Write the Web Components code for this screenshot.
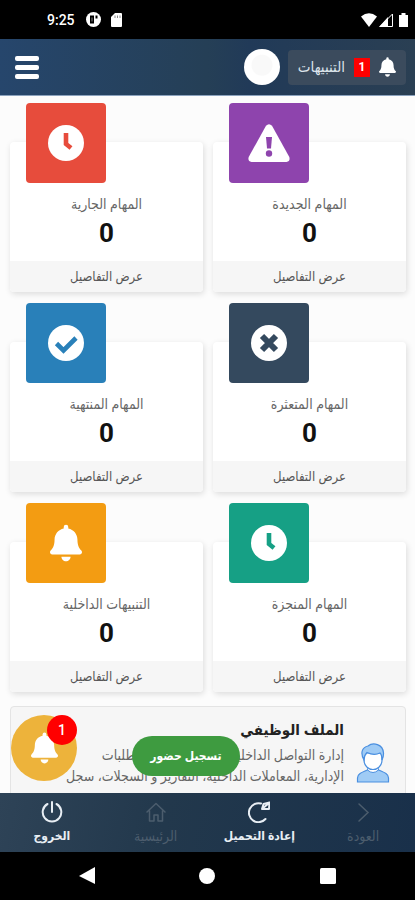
<!DOCTYPE html>
<html lang="ar" dir="rtl">
<head>
<meta charset="utf-8">
<meta name="viewport" content="width=device-width, initial-scale=1">
<title>المهام</title>
<style>
  html, body { margin: 0; height: 100%; }
  body { font-family: Roboto, "DejaVu Sans Condensed", "DejaVu Sans", sans-serif; background: #000; }
</style>
</head>
<body>
<task-app></task-app>

<script>
const ICONS = {
  bell: '<svg viewBox="0 0 448 512"><path fill="currentColor" d="M224 512c35 0 64-29 64-64H160c0 35 29 64 64 64zM439 362c-19-21-55-52-55-154 0-78-54-140-128-155V32a32 32 0 0 0-64 0v21C118 68 64 130 64 208c0 102-36 133-55 154-6 6-9 14-9 22 0 16 13 32 32 32h384c19 0 32-16 32-32 0-8-3-16-9-22z"/></svg>',
  clock: '<svg viewBox="0 0 36 36"><circle cx="18" cy="18" r="18" fill="currentColor"/><path d="M18 8v11l5 4" fill="none" stroke="var(--hole)" stroke-width="4.6"/></svg>',
  check: '<svg viewBox="0 0 36 36"><circle cx="18" cy="18" r="18" fill="currentColor"/><path d="M8.500 18.500l7 7L28 13" fill="none" stroke="var(--hole)" stroke-width="4.600"/></svg>',
  cross: '<svg viewBox="0 0 36 36"><circle cx="18" cy="18" r="18" fill="currentColor"/><path d="M11 11l14 14M25 11L11 25" fill="none" stroke="var(--hole)" stroke-width="6"/></svg>',
  warn: '<svg viewBox="0 0 42 38"><path fill="currentColor" d="M18 1.800Q21-1.500 24 1.800L41.300 33Q42.500 37.500 38.500 38H3.500Q-.5 37.500.7 33z"/><path fill="var(--hole)" d="M18 13h6l-1 11.500h-4z"/><circle cx="21" cy="29.500" r="3.200" fill="var(--hole)"/></svg>',
  power: '<svg viewBox="0 0 22 22" fill="none" stroke="currentColor" stroke-width="2" stroke-linecap="round"><path d="M11 1v10M6.500 3a9.300 9.300 0 1 0 9 0"/></svg>',
  home: '<svg viewBox="0 0 22 22" fill="none" stroke="currentColor" stroke-width="1.500" stroke-linejoin="round" stroke-linecap="round"><path d="M2 11l9-8.500L20 11M4.500 9.500V20H9v-6h4v6h4.500V9.500"/></svg>',
  reload: '<svg viewBox="0 0 22 22" fill="none" stroke="currentColor" stroke-width="2" stroke-linecap="round" stroke-linejoin="round"><path d="M17.500 18A9.500 9.500 0 1 1 13 2.500M14 8l1.500-5 6-1.500-.5 6.500zM14.500 7.500l6-5"/></svg>',
  next: '<svg viewBox="0 0 22 22" fill="none" stroke="currentColor" stroke-width="1.500" stroke-linecap="round"><path d="M7 3l9 8.500L7 20"/></svg>',
  person: '<svg viewBox="0 0 34 40"><path d="M1.500 39v-4c0-4 4-5.500 10-8h11c6 2.500 10 4 10 8v4z" fill="#9fcbf5" stroke="#4a8fe0" stroke-width="1.200"/><path d="M11.500 27l1-5h9l1 5q-5.500 5-11 0z" fill="#fff" stroke="#4a8fe0"/><path d="M8 10h18v7c0 6-4.500 9.500-9 9.500S8 23 8 17z" fill="#fff" stroke="#4a8fe0" stroke-width="1.200"/><path d="M8 17C3.500 9 7 4 12 3c5-4 15-2 15.500 7 .2 3-.5 5-1.500 7 0-4-1-6-2-7-5 2.500-9 1.500-13-.5-2 2-3 4.500-3 7.500z" fill="#9fcbf5" stroke="#4a8fe0" stroke-width="1.200"/></svg>'
};

const define = (name, render) => customElements.define(name, class extends HTMLElement {
  constructor() { super(); this.attachShadow({ mode: 'open' }); }
  connectedCallback() {
    const t = document.createElement('template');
    t.innerHTML = '<style>*{box-sizing:border-box}svg{display:block}</style>' + render(this);
    this.shadowRoot.replaceChildren(t.content.cloneNode(true));
  }
});

define('ui-icon', el => `
  <style>:host{display:block;flex:none} svg{width:100%;height:100%}</style>${ICONS[el.getAttribute('name')]}`);

define('status-bar', () => `
  <style>
    :host{display:flex;align-items:center;justify-content:space-between;height:39px;flex:none;background:#000;color:#fff;padding:0 7px 0 47px;direction:ltr}
    div{display:flex;align-items:center}
    span{font:500 14px/20px Roboto,sans-serif;margin-right:11px}
    .l svg{margin-right:10px}
    .r svg{margin-left:2px}
  </style>
  <div class="l"><span>9:25</span>
    <svg width="15" height="15" viewBox="0 0 15 15"><circle cx="7.500" cy="7.500" r="7.500" fill="#fff"/><path d="M4 3.500h4v8H4zM9.500 3.500h2v3h-2z" fill="#000"/><path d="M5.500 5.500h1v4h-1z" fill="#888"/></svg>
    <svg width="11" height="14" viewBox="0 0 11 14"><path d="M4 0h6q1 0 1 1v12q0 1-1 1H1q-1 0-1-1V4z" fill="#fff"/><path d="M4 2.500v2.500M6.500 2.500v2.500M9 2.500v2.500" stroke="#888"/></svg>
  </div>
  <div class="r">
    <svg width="16" height="14" viewBox="0 0 16 14"><path d="M0 3.500Q8-3 16 3.500L8 14z" fill="#fff"/></svg>
    <svg width="14" height="14" viewBox="0 0 14 14"><path d="M9 4v10H0z" fill="#fff"/><path d="M13.500 1v12.500H1z" fill="none" stroke="#fff"/></svg>
    <svg width="9" height="14" viewBox="0 0 9 14" style="margin:0 0 0 6px"><path d="M0 2h2.500V0h4v2H9v12H0z" fill="#fff"/></svg>
  </div>`);

define('app-header', () => `
  <style>
    :host{display:flex;align-items:center;gap:8px;height:57px;flex:none;padding:0 9px 0 15px;color:#fff;
      background:linear-gradient(90deg,#26466c,#253f56 50%,#213a58 60%,#2a3f53);border-bottom:1px solid #8ba2bd}
    button{border:0;color:inherit;font:inherit;padding:0;cursor:pointer}
    .alerts{display:flex;align-items:center;height:35px;padding:0 10px;background:#3b4b5d;border-radius:4px;gap:9px}
    .alerts ui-icon{width:17px;height:20px}
    b{background:#f00;font-size:12px;line-height:19px;width:16px;text-align:center}
    .alerts span{font-size:15px;line-height:20px;color:#dde4ec}
    .avatar{width:36px;height:36px;border-radius:50%;background:radial-gradient(circle at 50% 45%,#f9f9f9 10px,#fff 11px)}
    .menu{display:grid;gap:4px;margin-right:auto;width:24px;background:none}
    .menu i{height:5px;border-radius:2px;background:#fff}
  </style>
  <button class="alerts"><ui-icon name="bell"></ui-icon><b>1</b><span>التنبيهات</span></button>
  <button class="avatar" aria-label="الحساب"></button>
  <button class="menu" aria-label="القائمة"><i></i><i></i><i></i></button>`);

define('task-card', el => `
  <style>
    :host{display:flex;flex-direction:column;min-width:0}
    .icon{--hole:${el.getAttribute('color')};align-self:flex-end;width:80px;height:80px;margin:0 0 -41px 16px;z-index:1;
      display:grid;place-items:center;border-radius:4px;background:var(--hole);color:#fff}
    ui-icon{width:${({ warn: 42, bell: 32 })[el.getAttribute('icon')] || 36}px;height:38px}
    article{background:#fff;border-radius:4px;box-shadow:1px 2px 6px #0002;text-align:center;color:#666;overflow:hidden}
    h2{margin:0;padding-top:52px;font-size:14px;line-height:20px;font-weight:400}
    p{margin:0;padding:4px 0 13px;font:700 26px/30px Roboto,sans-serif;color:#111}
    a{display:block;font-size:13px;line-height:31px;background:#f6f6f6;color:#555;text-decoration:none}
  </style>
  <div class="icon"><ui-icon name="${el.getAttribute('icon')}"></ui-icon></div>
  <article><h2><slot></slot></h2><p>${el.getAttribute('count')}</p><a href="#">عرض التفاصيل</a></article>`);

define('profile-panel', () => `
  <style>
    :host{display:flex;align-items:flex-start;gap:12px;padding:12px 15px;min-height:120px;
      background:#f6f6f6;border:1px solid #e4e4e4;border-radius:4px}
    ui-icon{width:34px;height:40px;margin-top:24px}
    h2{margin:0 0 4px;font-size:15px;line-height:22px;font-weight:700;color:#222}
    p{margin:0;font-size:14px;line-height:21px;color:#666;white-space:nowrap}
  </style>
  <ui-icon name="person"></ui-icon>
  <div><h2>الملف الوظيفي</h2>
  <p>إدارة التواصل الداخلية، الإدارة و متابعة الطلبات<br>الإدارية، المعاملات الداخلية، التقارير و السجلات، سجل</p></div>`);

define('floating-actions', () => `
  <style>
    :host{position:absolute;inset:auto 0 12px 11px;height:66px;pointer-events:none;z-index:3}
    button{position:absolute;border:0;padding:0;color:#fff;font:inherit;pointer-events:auto}
    .bell{left:0;bottom:0;width:66px;height:66px;border-radius:50%;background:#edb33b;display:grid;place-items:center}
    .bell ui-icon{width:27px;height:32px}
    b{position:absolute;right:0;top:0;width:30px;height:30px;border-radius:50%;background:#f00;font-size:14px;line-height:30px;font-weight:500}
    .attend{left:121px;bottom:5px;width:108px;height:40px;border-radius:20px;background:#3e9b40;font-size:12px;font-weight:700}
  </style>
  <button class="bell" aria-label="التنبيهات"><ui-icon name="bell"></ui-icon><b>1</b></button>
  <button class="attend">تسجيل حضور</button>`);

define('nav-item', el => `
  <style>
    :host{flex:1;min-width:0}
    button{width:100%;height:100%;border:0;background:none;padding:3px 0 0;display:flex;flex-direction:column;align-items:center;justify-content:center;
      gap:2px;font:700 12px/22px Roboto,"DejaVu Sans Condensed","DejaVu Sans",sans-serif;color:#e8eef4;white-space:nowrap}
    button:disabled{color:#4c5d6d;font-weight:400;font-size:14px}
    ui-icon{width:22px;height:22px}
  </style>
  <button ${el.hasAttribute('disabled') ? 'disabled' : ''}><ui-icon name="${el.getAttribute('icon')}"></ui-icon><slot></slot></button>`);

define('bottom-nav', () => `
  <style>:host{display:flex;height:59px;flex:none;background:linear-gradient(100deg,#2e4357,#22384c 40%,#19304a)}</style>
  <nav-item icon="next" disabled>العودة</nav-item>
  <nav-item icon="reload">إعادة التحميل</nav-item>
  <nav-item icon="home" disabled>الرئيسية</nav-item>
  <nav-item icon="power">الخروج</nav-item>`);

define('system-bar', () => `
  <style>
    :host{display:flex;justify-content:space-around;align-items:center;height:48px;flex:none;background:#000;direction:ltr;padding:0 27px}
    button{border:0;background:none;padding:0}
  </style>
  <button aria-label="رجوع"><svg width="16" height="18"><path d="M16 0v17L0 9z" fill="#fff"/></svg></button>
  <button aria-label="الشاشة الرئيسية"><svg width="16" height="16"><circle cx="8" cy="8" r="8" fill="#fff"/></svg></button>
  <button aria-label="التطبيقات"><svg width="16" height="16"><rect width="16" height="16" rx="1.500" fill="#fff"/></svg></button>`);

define('task-app', () => `
  <style>
    :host{display:flex;flex-direction:column;height:100vh}
    .view{flex:1;min-height:0;position:relative;display:flex;background:#fcfcfc}
    main{flex:1;min-width:0;overflow:hidden;padding:7px 9px 0 10px}
    .grid{display:grid;grid-template-columns:1fr 1fr;gap:11px 10px;margin-bottom:14px}
  </style>
  <status-bar></status-bar>
  <app-header></app-header>
  <div class="view">
    <main>
      <div class="grid">
        <task-card icon="warn" color="#8e44ad" count="0">المهام الجديدة</task-card>
        <task-card icon="clock" color="#e74c3c" count="0">المهام الجارية</task-card>
        <task-card icon="cross" color="#34495e" count="0">المهام المتعثرة</task-card>
        <task-card icon="check" color="#2980b9" count="0">المهام المنتهية</task-card>
        <task-card icon="clock" color="#16a085" count="0">المهام المنجزة</task-card>
        <task-card icon="bell" color="#f39c12" count="0">التنبيهات الداخلية</task-card>
      </div>
      <profile-panel></profile-panel>
    </main>
    <floating-actions></floating-actions>
  </div>
  <bottom-nav></bottom-nav>
  <system-bar></system-bar>`);
</script>
</body>
</html>
